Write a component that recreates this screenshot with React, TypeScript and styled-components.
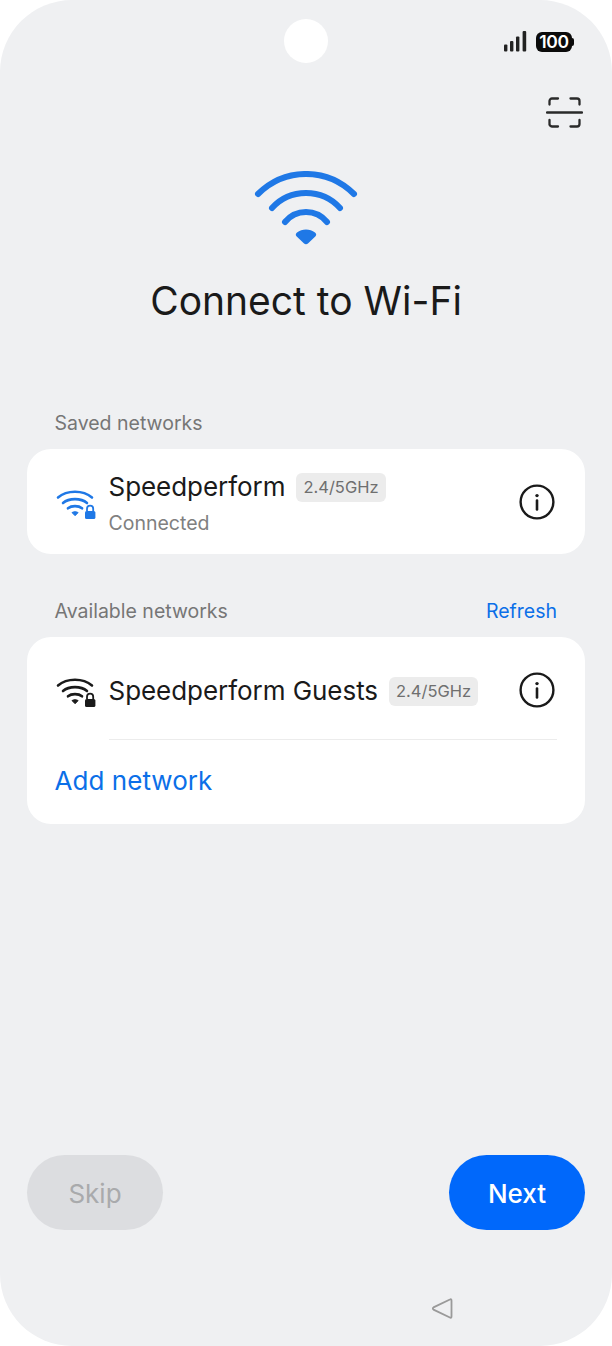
import React from "react";
import styled, { createGlobalStyle } from "styled-components";

const Global = createGlobalStyle`
  html, body { margin: 0; padding: 0; background: #fff; }
  body { font-family: Inter, "Noto Sans", "Liberation Sans", sans-serif; }
  * { box-sizing: border-box; }
`;

const Phone = styled.div`
  position: relative;
  width: 612px;
  height: 1346px;
  background: #eff0f2;
  border-radius: 72px;
  overflow: hidden;
  display: flex;
  flex-direction: column;
  padding: 0 27px;
`;
const Camera = styled.div`
  position: absolute;
  left: 284px;
  top: 19px;
  width: 44px;
  height: 44px;
  border-radius: 50%;
  background: #fff;
`;
const StatusBar = styled.div`
  height: 32px;
  margin-top: 26px;
  display: flex;
  justify-content: flex-end;
  align-items: center;
  gap: 9px;
  padding-right: 13px;
`;
const Battery = styled.div`
  position: relative;
  width: 36px;
  height: 20px;
  background: #0b0b0b;
  border-radius: 6px;
  color: #fff;
  font-size: 17.5px;
  font-weight: 600;
  letter-spacing: -0.4px;
  line-height: 20px;
  text-align: center;
  &::after {
    content: "";
    position: absolute;
    right: -2px;
    top: 6px;
    width: 2px;
    height: 8px;
    border-radius: 0 2px 2px 0;
    background: #0b0b0b;
  }
`;
const ScanRow = styled.div`
  margin-top: 39px;
  height: 32px;
  display: flex;
  justify-content: flex-end;
  padding-right: 2.5px;
`;
const Hero = styled.div`
  margin-top: 42px;
  display: flex;
  flex-direction: column;
  align-items: center;
`;
const Title = styled.h1`
  margin: 26px 0 0;
  font-size: 39px;
  line-height: 56px;
  font-weight: 420;
  color: #1a1a1a;
`;
const SectionHead = styled.div<{ $top: number }>`
  margin-top: ${(p) => p.$top}px;
  height: 28px;
  padding: 0 28px 0 27.5px;
  display: flex;
  justify-content: space-between;
  align-items: center;
`;
const SectionLabel = styled.span`
  font-size: 19.5px;
  color: #767676;
`;
const Refresh = styled.span`
  font-size: 19.5px;
  font-weight: 420;
  color: #0b6fe8;
`;
const Card = styled.div<{ $top: number }>`
  margin-top: ${(p) => p.$top}px;
  background: #fff;
  border-radius: 24px;
  padding: 0 28px 0 27.5px;
  display: flex;
  flex-direction: column;
`;
const Row = styled.div<{ $height: number; $shift?: number }>`
  height: ${(p) => p.$height}px;
  padding-top: ${(p) => p.$shift ?? 0}px;
  display: flex;
  align-items: center;
`;
const WifiSlot = styled.div`
  width: 54px;
  flex: none;
  display: flex;
  padding-top: 2px;
`;
const RowText = styled.div`
  flex: 1;
  display: flex;
  flex-direction: column;
  padding-top: 2px;
`;
const NameLine = styled.div`
  display: flex;
  align-items: center;
  gap: 11px;
`;
const Name = styled.span`
  font-size: 26px;
  line-height: 36px;
  font-weight: 420;
  color: #1a1a1a;
  letter-spacing: -0.05px;
`;
const Tag = styled.span`
  height: 29px;
  padding: 0 7px;
  border-radius: 6px;
  background: #ececec;
  color: #6f6f6f;
  font-size: 16.5px;
  line-height: 29px;
`;
const Sub = styled.span`
  margin-top: 5px;
  font-size: 19.5px;
  line-height: 26px;
  color: #808080;
`;
const InfoSlot = styled.div`
  flex: none;
  display: flex;
  margin-right: 2px;
`;
const Divider = styled.div`
  margin-left: 54px;
  height: 1px;
  background: #ececec;
`;
const AddNetwork = styled.div`
  height: 84px;
  padding-bottom: 3px;
  display: flex;
  align-items: center;
  font-size: 26px;
  font-weight: 420;
  color: #0b6fe8;
  letter-spacing: 0.05px;
`;
const Footer = styled.div`
  margin-top: auto;
  margin-bottom: 116px;
  display: flex;
  justify-content: space-between;
`;
const PillButton = styled.button<{ $primary?: boolean }>`
  width: 136px;
  height: 75px;
  padding: 2px 0 0;
  border: 0;
  border-radius: 38px;
  font-family: inherit;
  font-size: 26px;
  font-weight: ${(p) => (p.$primary ? 500 : 400)};
  background: ${(p) => (p.$primary ? "#0068fb" : "#dcdde0")};
  color: ${(p) => (p.$primary ? "#fff" : "#a9aaac")};
`;
const BackIcon = styled.svg`
  position: absolute;
  left: 431px;
  top: 1297px;
`;

const Wifi = ({ color }: { color: string }) => (
  <svg width="41" height="32" viewBox="0 0 41 32" fill="none">
    <g stroke={color} strokeWidth="2.6" strokeLinecap="round">
      <path d="M3 10.5C12 2.800 28 2.800 37 10.5" />
      <path d="M8 16C14 10.800 26 10.800 32 16" />
      <path d="M13 21.300C16.500 18.400 23.500 18.400 27 21.300" />
    </g>
    <path d="M17 25.600c1.800-1.200 4.300-1.200 6.100 0l-3 3.100z" fill={color} stroke={color} strokeLinejoin="round" />
    <path d="M32 24v-2.200a3.100 3.100 0 0 1 6.200 0V24" stroke={color} strokeWidth="1.800" fill="none" />
    <rect x="30" y="24" width="10.400" height="8" rx="1.600" fill={color} />
  </svg>
);

const InfoIcon = () => (
  <InfoSlot>
    <svg width="36" height="36" viewBox="0 0 36 36" fill="none">
      <circle cx="18" cy="18" r="16.400" stroke="#1a1a1a" strokeWidth="2.400" />
      <circle cx="18" cy="11.600" r="1.700" fill="#1a1a1a" />
      <path d="M18 16.500v9" stroke="#1a1a1a" strokeWidth="2.600" strokeLinecap="round" />
    </svg>
  </InfoSlot>
);

export default function App() {
  return (
    <Phone>
      <Global />
      <Camera />
      <StatusBar>
        <svg width="23" height="22" viewBox="0 0 23 22" fill="#222">
          <rect x="0" y="13.500" width="3.400" height="7" rx="1" />
          <rect x="6" y="10" width="3.400" height="10.500" rx="1" />
          <rect x="12" y="5.500" width="3.400" height="15" rx="1" />
          <rect x="18.600" y="0" width="3.600" height="20.500" rx="1" />
        </svg>
        <Battery>100</Battery>
      </StatusBar>
      <ScanRow>
        <svg width="37" height="33" viewBox="0 0 37 33" fill="none" stroke="#2a2a2a" strokeWidth="2.300" strokeLinecap="round">
          <path d="M3.500 7.500V4A2.500 2.500 0 0 1 6 1.500H12" />
          <path d="M24.500 1.500H31A2.500 2.500 0 0 1 33.500 4V7.500" />
          <path d="M1 15.500h35" />
          <path d="M3.500 23v3.500A2.500 2.500 0 0 0 6 29.500H12" />
          <path d="M24.500 29.500H31a2.500 2.500 0 0 0 2.500-2.500V23" />
        </svg>
      </ScanRow>
      <Hero>
        <svg width="104" height="76" viewBox="0 0 104 76" fill="none">
          <g stroke="#1f78e6" strokeWidth="6" strokeLinecap="round">
            <path d="M4 23C31 -3.700 73 -3.700 100 23" />
            <path d="M18 37C36 17 68 17 86 37" />
            <path d="M31 51C42 37.700 62 37.700 73 51" />
          </g>
          <path d="M43 61.500C48 57.500 56 57.500 61 61.500C62.500 62.700 62.600 64.300 61.300 65.500L54.200 72.300C52.900 73.500 51.100 73.500 49.800 72.300L42.700 65.500C41.400 64.300 41.500 62.700 43 61.500Z" fill="#1f78e6" />
        </svg>
        <Title>Connect to Wi-Fi</Title>
      </Hero>
      <SectionHead $top={80}>
        <SectionLabel>Saved networks</SectionLabel>
      </SectionHead>
      <Card $top={12}>
        <Row $height={105}>
          <WifiSlot><Wifi color="#1f78e6" /></WifiSlot>
          <RowText>
            <NameLine>
              <Name>Speedperform</Name>
              <Tag>2.4/5GHz</Tag>
            </NameLine>
            <Sub>Connected</Sub>
          </RowText>
          <InfoIcon />
        </Row>
      </Card>
      <SectionHead $top={43}>
        <SectionLabel>Available networks</SectionLabel>
        <Refresh>Refresh</Refresh>
      </SectionHead>
      <Card $top={12}>
        <Row $height={102} $shift={4}>
          <WifiSlot><Wifi color="#1a1a1a" /></WifiSlot>
          <RowText>
            <NameLine>
              <Name>Speedperform Guests</Name>
              <Tag>2.4/5GHz</Tag>
            </NameLine>
          </RowText>
          <InfoIcon />
        </Row>
        <Divider />
        <AddNetwork>Add network</AddNetwork>
      </Card>
      <Footer>
        <PillButton>Skip</PillButton>
        <PillButton $primary>Next</PillButton>
      </Footer>
      <BackIcon width="23" height="23" viewBox="0 0 23 23" fill="none">
        <path d="M20.500 3.500V19.500C20.500 20.700 19.800 21 18.900 20.500L2.500 12.600C1.600 12 1.600 11 2.500 10.400L18.900 2.500C19.800 2 20.500 2.300 20.500 3.500Z" stroke="#9a9a9a" strokeWidth="1.800" />
      </BackIcon>
    </Phone>
  );
}
